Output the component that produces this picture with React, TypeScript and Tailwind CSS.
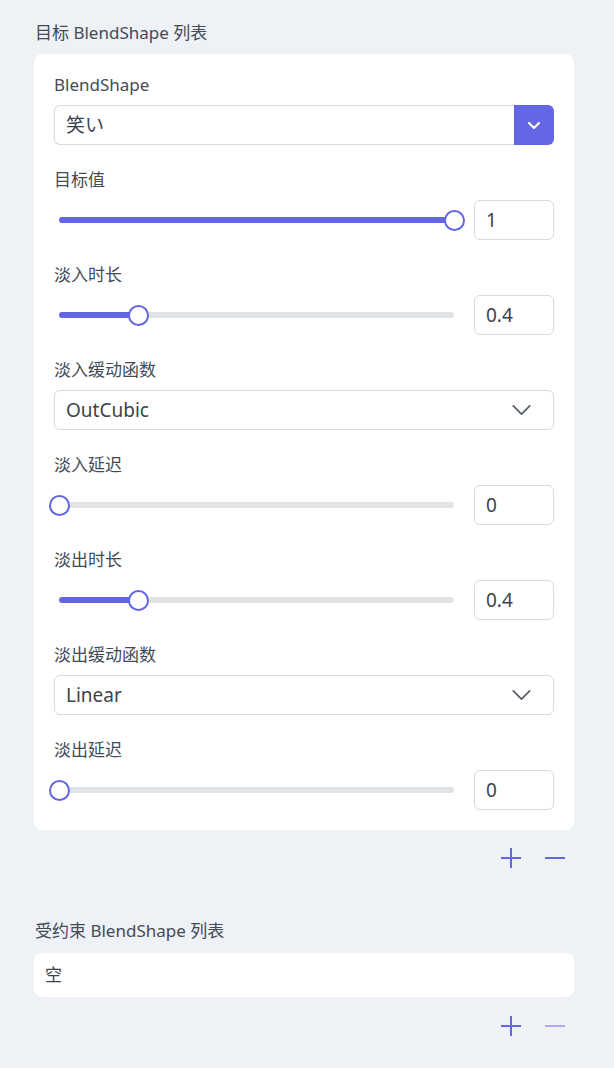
import React from "react";

const FONT = { fontFamily: '"Noto Sans", "Noto Sans CJK SC", sans-serif' };

function Label({ children }: { children: React.ReactNode }) {
  return <div className="text-[17px] leading-[24px] text-[#454b55]">{children}</div>;
}

function SliderRow({ value, max }: { value: string; max: number }) {
  const pct = Math.max(0, Math.min(1, parseFloat(value) / max));
  return (
    <div className="flex items-center gap-[20px] mt-[8px]">
      <div className="relative flex-1 h-[40px]">
        <div className="absolute left-[5px] right-0 top-[17px] h-[6px] rounded-full bg-[#e1e4e7]" />
        <div
          className="absolute left-[5px] top-[17px] h-[6px] rounded-l-full bg-[#6466e3]"
          style={{ width: `calc((100% - 5px) * ${pct})` }}
        />
        <div
          className="absolute top-[10px] w-[21px] h-[21px] rounded-full bg-white border-2 border-[#6466e3]"
          style={{ left: `calc(5px + (100% - 5px) * ${pct} - 10.5px)` }}
        />
      </div>
      <div className="w-[80px] h-[40px] rounded-[6px] border border-[#d6d9dd] bg-white flex items-center px-[11px] text-[19px] text-[#3d434c]">
        {value}
      </div>
    </div>
  );
}

function Select({ value }: { value: string }) {
  return (
    <div className="mt-[8px] h-[40px] rounded-[6px] border border-[#d6d9dd] bg-white flex items-center justify-between pl-[11px] pr-[22px] text-[19px] text-[#3d434c]">
      <span>{value}</span>
      <svg viewBox="0 0 20 11" className="w-[19px] h-[10px]" fill="none" stroke="#5b616b" strokeWidth={2} strokeLinecap="round" strokeLinejoin="round">
        <path d="M1 1l9 9 9-9" />
      </svg>
    </div>
  );
}

function PlusMinus({ minusDisabled }: { minusDisabled?: boolean }) {
  return (
    <div className="flex justify-end items-center gap-[24px] pr-[9px]">
      <svg viewBox="0 0 20 20" className="w-[20px] h-[20px]" fill="none" stroke="#6466e3" strokeWidth={2}>
        <path d="M10 0v20M0 10h20" />
      </svg>
      <svg viewBox="0 0 20 20" className="w-[20px] h-[20px]" fill="none" stroke={minusDisabled ? "#a9abec" : "#6466e3"} strokeWidth={2}>
        <path d="M0 10h20" />
      </svg>
    </div>
  );
}

export default function App() {
  return (
    <div className="min-h-screen w-full bg-[#eef1f6] pl-[34px] pr-[40px] pt-[21px] pb-[40px]" style={FONT}>
      <div className="pl-[1px] text-[17px] leading-[24px] text-[#454b55]">目标 BlendShape 列表</div>
      <div className="mt-[9px] rounded-[8px] bg-white px-[20px] pt-[19px] pb-[20px] flex flex-col gap-[23px]">
        <div>
          <Label>BlendShape</Label>
          <div className="mt-[8px] h-[40px] flex">
            <div className="flex-1 h-full rounded-l-[6px] border border-r-0 border-[#d6d9dd] flex items-center px-[11px] text-[19px] text-[#3d434c]">
              笑い
            </div>
            <div className="w-[40px] h-full rounded-r-[6px] bg-[#6466e3] flex items-center justify-center">
              <svg viewBox="0 0 12 7" className="w-[12px] h-[7px]" fill="none" stroke="#ffffff" strokeWidth={2.2} strokeLinecap="round" strokeLinejoin="round">
                <path d="M1 1l5 5 5-5" />
              </svg>
            </div>
          </div>
        </div>
        <div>
          <Label>目标值</Label>
          <SliderRow value="1" max={1} />
        </div>
        <div>
          <Label>淡入时长</Label>
          <SliderRow value="0.4" max={2} />
        </div>
        <div>
          <Label>淡入缓动函数</Label>
          <Select value="OutCubic" />
        </div>
        <div>
          <Label>淡入延迟</Label>
          <SliderRow value="0" max={2} />
        </div>
        <div>
          <Label>淡出时长</Label>
          <SliderRow value="0.4" max={2} />
        </div>
        <div>
          <Label>淡出缓动函数</Label>
          <Select value="Linear" />
        </div>
        <div>
          <Label>淡出延迟</Label>
          <SliderRow value="0" max={2} />
        </div>
      </div>
      <div className="mt-[18px]">
        <PlusMinus />
      </div>
      <div className="mt-[51px] pl-[1px] text-[17px] leading-[24px] text-[#454b55]">受约束 BlendShape 列表</div>
      <div className="mt-[10px] h-[44px] rounded-[8px] bg-white flex items-center px-[11px] text-[17px] text-[#3d434c]">空</div>
      <div className="mt-[19px]">
        <PlusMinus minusDisabled />
      </div>
    </div>
  );
}
